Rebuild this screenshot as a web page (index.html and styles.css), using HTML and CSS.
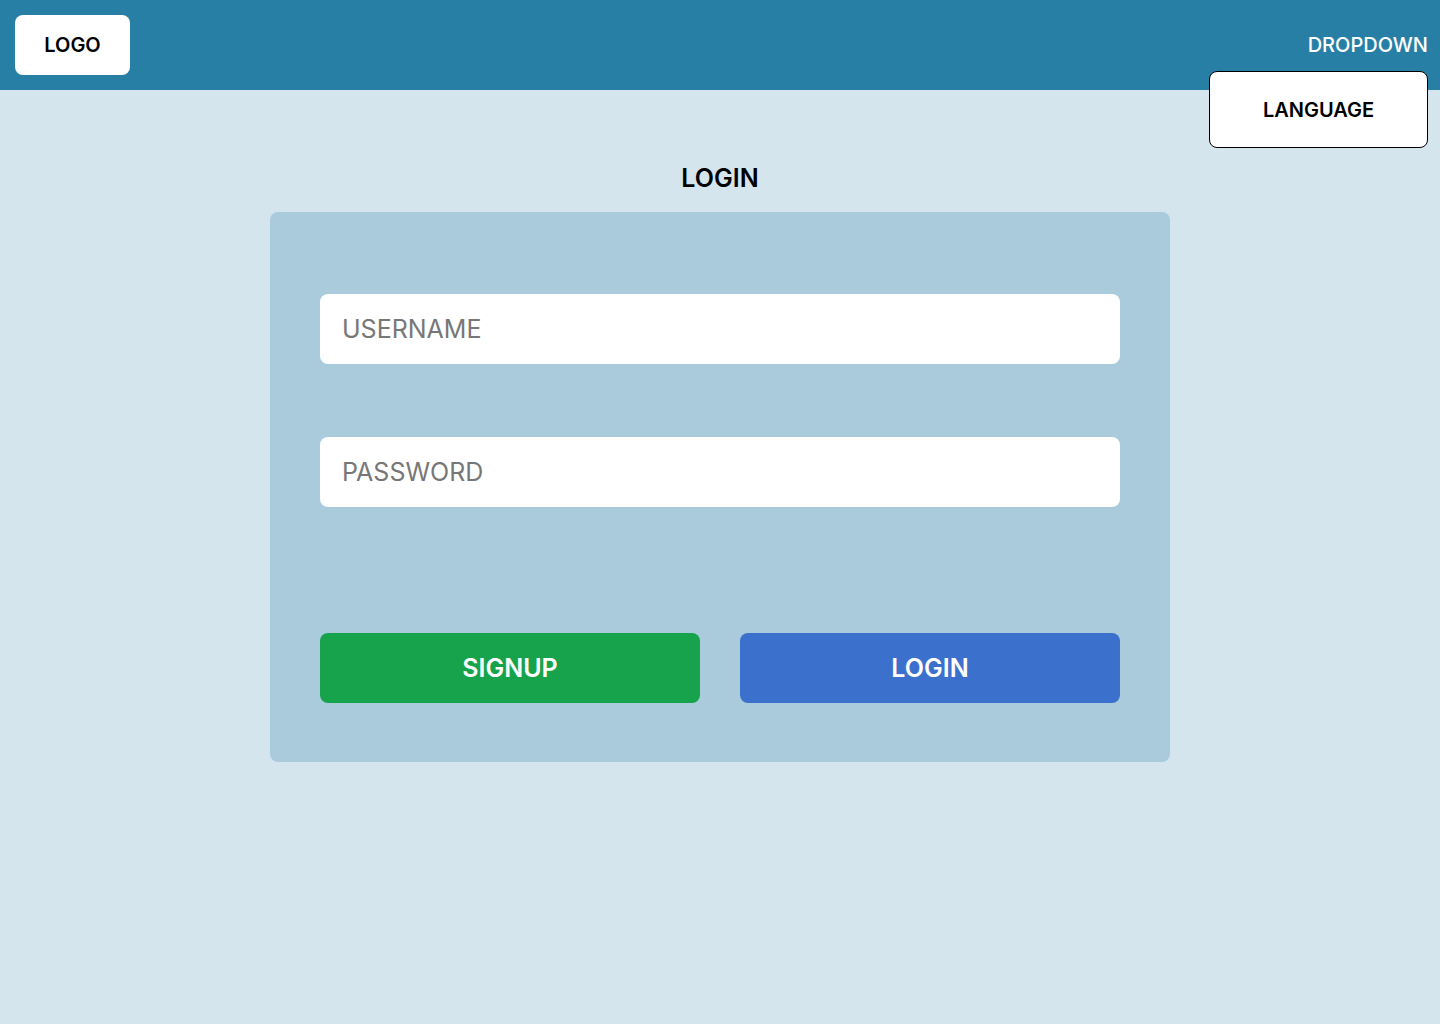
FILE: index.html
```html
<!DOCTYPE html>
<html lang="en">
<head>
<meta charset="utf-8">
<title>Login</title>
<link rel="stylesheet" href="styles.css">
</head>
<body>
<header class="topbar">
  <div class="logo">LOGO</div>
  <div class="dropdown">
    <span class="dropdown-label">DROPDOWN</span>
    <div class="dropdown-menu">LANGUAGE</div>
  </div>
</header>
<main class="main">
  <h1 class="title">LOGIN</h1>
  <form class="card">
    <div class="fields">
      <input class="field" type="text" placeholder="USERNAME">
      <input class="field" type="password" placeholder="PASSWORD">
    </div>
    <div class="actions">
      <button type="button" class="btn btn-signup">SIGNUP</button>
      <button type="button" class="btn btn-login">LOGIN</button>
    </div>
  </form>
</main>
</body>
</html>
```
FILE: styles.css
```css
* { box-sizing: border-box; }
html, body { margin: 0; padding: 0; }
body {
  font-family: Inter, "Noto Sans", sans-serif;
  background: #d4e5ee;
  min-height: 1024px;
  color: #000;
}
.topbar {
  height: 90px;
  background: #287fa6;
  display: flex;
  justify-content: space-between;
  align-items: flex-start;
  padding: 15px 12px 0 15px;
}
.logo {
  width: 115px;
  height: 60px;
  background: #fff;
  border-radius: 8px;
  display: flex;
  align-items: center;
  justify-content: center;
  font-weight: 600;
  font-size: 20px;
}
.dropdown {
  position: relative;
  height: 60px;
  display: flex;
  align-items: center;
}
.dropdown-label {
  color: #fff;
  font-size: 20px;
  font-weight: 500;
}
.dropdown-menu {
  position: absolute;
  right: 0;
  top: 56px;
  width: 219px;
  height: 77px;
  background: #fff;
  border: 1px solid #000;
  border-radius: 8px;
  display: flex;
  align-items: center;
  justify-content: center;
  font-weight: 600;
  font-size: 20px;
  z-index: 2;
}
.main {
  display: flex;
  flex-direction: column;
  align-items: center;
  padding-top: 76px;
}
.title {
  margin: 0 0 22px;
  font-size: 25px;
  font-weight: 600;
  line-height: 24px;
}
.card {
  width: 900px;
  height: 550px;
  background: #aacbdc;
  border-radius: 8px;
  padding: 82px 50px 59px;
  display: flex;
  flex-direction: column;
  justify-content: space-between;
}
.fields {
  display: flex;
  flex-direction: column;
  gap: 73px;
}
.field {
  width: 800px;
  height: 70px;
  border: none;
  border-radius: 8px;
  background: #fff;
  padding: 0 22px;
  font-family: inherit;
  font-size: 25px;
  color: #333;
  outline: none;
}
.field::placeholder { color: #777; }
.actions {
  display: flex;
  gap: 40px;
}
.btn {
  flex: 1;
  height: 70px;
  border: none;
  border-radius: 8px;
  color: #fff;
  font-family: inherit;
  font-size: 25px;
  font-weight: 600;
  cursor: pointer;
}
.btn-signup { background: #16a34b; }
.btn-login { background: #3b70cc; }
```
